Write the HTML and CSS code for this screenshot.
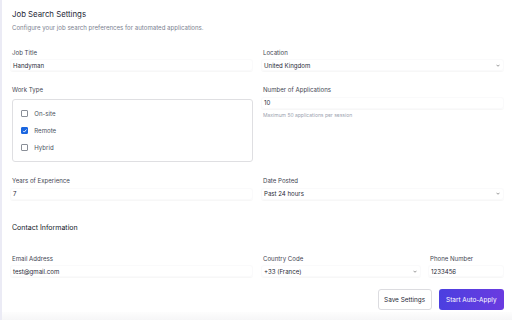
FILE: index.html
```html
<!DOCTYPE html>
<html lang="en">
<head>
<meta charset="utf-8">
<title>Job Search Settings</title>
<link rel="stylesheet" href="styles.css">
</head>
<body>
<div class="page">
  <header class="head">
    <h1 class="title">Job Search Settings</h1>
    <p class="desc">Configure your job search preferences for automated applications.</p>
  </header>

  <div class="grid">
    <div class="field">
      <div class="label">Job Title</div>
      <div class="input">Handyman</div>
    </div>
    <div class="field">
      <div class="label">Location</div>
      <div class="input select">United Kingdom<svg class="chev" viewBox="0 0 8 5"><path d="M1 1l3 3 3-3" fill="none" stroke="#555" stroke-width="1.2"/></svg></div>
    </div>
    <div class="field">
      <div class="label">Work Type</div>
      <div class="checks">
        <div class="check"><span class="box"></span><span>On-site</span></div>
        <div class="check"><span class="box on"><svg viewBox="0 0 10 10"><path d="M2.2 5.2l2 2.1 3.8-4.6" fill="none" stroke="#fff" stroke-width="1.6"/></svg></span><span>Remote</span></div>
        <div class="check"><span class="box"></span><span>Hybrid</span></div>
      </div>
    </div>
    <div class="field">
      <div class="label">Number of Applications</div>
      <div class="input">10</div>
      <p class="help">Maximum 50 applications per session</p>
    </div>
    <div class="field">
      <div class="label">Years of Experience</div>
      <div class="input">7</div>
    </div>
    <div class="field">
      <div class="label">Date Posted</div>
      <div class="input select">Past 24 hours<svg class="chev" viewBox="0 0 8 5"><path d="M1 1l3 3 3-3" fill="none" stroke="#555" stroke-width="1.2"/></svg></div>
    </div>
  </div>

  <h2 class="section">Contact Information</h2>

  <div class="grid grid-contact">
    <div class="field">
      <div class="label">Email Address</div>
      <div class="input">test@gmail.com</div>
    </div>
    <div class="split">
      <div class="field">
        <div class="label">Country Code</div>
        <div class="input select">+33 (France)<svg class="chev" viewBox="0 0 8 5"><path d="M1 1l3 3 3-3" fill="none" stroke="#555" stroke-width="1.2"/></svg></div>
      </div>
      <div class="field">
        <div class="label">Phone Number</div>
        <div class="input">1233456</div>
      </div>
    </div>
  </div>

  <div class="actions">
    <button class="btn">Save Settings</button>
    <button class="btn primary">Start Auto-Apply</button>
  </div>
</div>
<div class="foot"></div>
</body>
</html>
```

FILE: styles.css
```css
* { box-sizing: border-box; margin: 0; padding: 0; }
html, body { width: 512px; height: 320px; overflow: hidden; background: #fff; }
body {
  font-family: Inter, "Noto Sans", sans-serif;
  color: #111827;
  border-left: 2px solid #ebebf5;
  position: relative;
}
.page { padding: 9px 8px 0 8px; }
.head { padding-left: 2px; }
.title { font-size: 7.8px; line-height: 10px; font-weight: 400; color: #1f2937; }
.desc { margin-top: 5px; font-size: 6.1px; line-height: 8px; color: #7b8190; }

.grid {
  display: grid;
  grid-template-columns: 1fr 1fr;
  column-gap: 8px;
  row-gap: 15px;
  margin-top: 16.5px;
}
.field { display: flex; flex-direction: column; min-width: 0; }
.label { font-size: 6.1px; line-height: 8px; color: #3f4653; padding-left: 2px; margin-bottom: 2.5px; }
.input {
  height: 12px;
  display: flex; align-items: center; justify-content: space-between;
  padding: 0 3px 0 2px;
  font-size: 6.1px; color: #1f2937;
  border-radius: 3px;
  box-shadow: 0 0.7px 1px rgba(0,0,0,0.035);
  border: 0.5px solid #fafafb;
}
.chev { width: 4px; height: 3px; }
.checks {
  margin: 2.5px 0 0 1.7px;
  border: 1px solid #dfdfe2;
  border-radius: 3px;
  padding: 10px 8px;
  display: flex; flex-direction: column; gap: 9.5px;
  height: 63px;
  justify-content: center;
}
.check { display: flex; align-items: center; gap: 6px; height: 8px; font-size: 6.1px; color: #4b5260; }
.box { width: 7.6px; height: 7.6px; border: 0.8px solid #8a8f98; border-radius: 1px; display: flex; }
.box.on { background: #1a66e0; border-color: #1a66e0; }
.box svg { width: 100%; height: 100%; }
.help { margin-top: 3.8px; font-size: 5px; line-height: 7px; color: #9ca3af; padding-left: 2px; }

.section { margin-top: 23.5px; padding-left: 2px; font-size: 7px; line-height: 9px; font-weight: 400; color: #111827; }
.grid-contact { margin-top: 22.8px; }
.split { display: grid; grid-template-columns: 160fr 76fr; column-gap: 7px; }

.actions { display: flex; justify-content: flex-end; gap: 7px; margin-top: 12px; }
.btn {
  height: 20.5px; padding: 0 5.5px;
  font-family: inherit; font-size: 6.4px; font-weight: 400; color: #1f2937;
  background: #fff; border: 0.8px solid #dcdce0; border-radius: 3px;
}
.primary {
  color: #fff; border: none; padding: 0 7.5px;
  background: linear-gradient(90deg, #4b3fe0, #6a3be0);
}
.foot { position: absolute; left: 0; right: 0; bottom: 0; height: 8px; background: linear-gradient(#fdfdfd, #f6f6f7); }
```
